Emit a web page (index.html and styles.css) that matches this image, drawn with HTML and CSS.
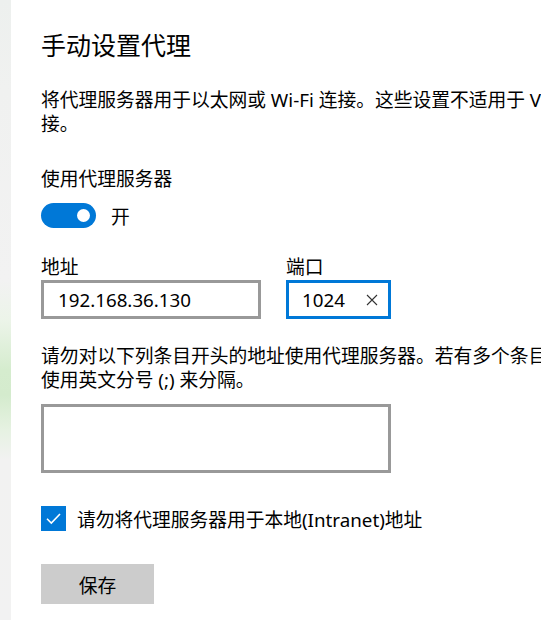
FILE: index.html
```html
<!DOCTYPE html>
<html lang="zh-CN">
<head>
<meta charset="utf-8">
<title>手动设置代理</title>
<link rel="stylesheet" href="styles.css">
</head>
<body>
<div class="side"></div>
<main class="main">
  <h1 class="title">手动设置代理</h1>
  <p class="desc">将代理服务器用于以太网或 Wi-Fi 连接。这些设置不适用于 VPN 连接。</p>
  <div class="label label-use">使用代理服务器</div>
  <div class="toggle-row">
    <span class="toggle"><span class="knob"></span></span>
    <span class="toggle-text">开</span>
  </div>
  <div class="fields">
    <div class="field field-addr">
      <div class="label">地址</div>
      <div class="input input-addr">192.168.36.130</div>
    </div>
    <div class="field field-port">
      <div class="label">端口</div>
      <div class="input input-port focused">
        <span>1024</span>
        <svg class="clear" width="12" height="12" viewBox="0 0 12 12"><path d="M1 1L11 11M11 1L1 11" stroke="#333" stroke-width="1.1" fill="none"/></svg>
      </div>
    </div>
  </div>
  <p class="desc desc-exc">请勿对以下列条目开头的地址使用代理服务器。若有多个条目，请使用英文分号 (;) 来分隔。</p>
  <div class="textarea"></div>
  <div class="check-row">
    <span class="checkbox"><svg width="25" height="25" viewBox="0 0 25 25"><path d="M6 12.8L10.3 17L19 8" stroke="#fff" stroke-width="1.6" fill="none"/></svg></span>
    <span class="check-text">请勿将代理服务器用于本地(Intranet)地址</span>
  </div>
  <div class="btn">保存</div>
</main>
</body>
</html>
```

FILE: styles.css
```css
html, body {
  margin: 0;
  padding: 0;
  overflow: hidden;
  background: #fff;
}
body {
  display: flex;
  width: 541px;
  height: 620px;
  font-family: "Noto Sans", "Noto Sans CJK SC", sans-serif;
  font-size: 18.75px;
  color: #000;
}
.side {
  flex: 0 0 11px;
  height: 620px;
  background: linear-gradient(to bottom, #edf0ee 0, #f0f1f0 90px, #f2f2f2 280px, #ecf4e9 320px, #d5ecce 370px, #d4ebcd 395px, #e6f2e2 430px, #f2f2f1 460px, #f2f2f2 100%);
}
.main {
  flex: 0 0 556px;
  padding-left: 30px;
}
.title {
  margin: 28px 0 0;
  font-size: 25px;
  font-weight: normal;
  line-height: 34px;
}
.desc {
  margin: 26px 0 0;
  line-height: 24px;
}
.label {
  line-height: 24px;
}
.label-use {
  margin-top: 31px;
}
.toggle-row {
  margin-top: 12px;
  display: flex;
  align-items: center;
  height: 25px;
}
.toggle {
  width: 55px;
  height: 25px;
  border-radius: 13px;
  background: #0078d7;
  display: flex;
  align-items: center;
  justify-content: flex-end;
  padding-right: 6px;
  box-sizing: border-box;
}
.knob {
  width: 13px;
  height: 13px;
  border-radius: 50%;
  background: #fff;
}
.toggle-text {
  margin-left: 15px;
}
.fields {
  margin-top: 27px;
  display: flex;
  gap: 25px;
}
.field .label {
  margin-bottom: 1px;
}
.input {
  box-sizing: border-box;
  height: 39px;
  border: 3px solid #999;
  display: flex;
  align-items: center;
  padding-left: 14px;
  line-height: 24px;
}
.input-addr {
  width: 220px;
}
.input-port {
  width: 105px;
  padding-left: 13px;
  justify-content: space-between;
  padding-right: 10px;
}
.focused {
  border-color: #0078d7;
}
.clear {
  display: block;
}
.desc-exc {
  margin-top: 25px;
}
.textarea {
  margin-top: 12px;
  box-sizing: border-box;
  width: 350px;
  height: 69px;
  border: 3px solid #999;
}
.check-row {
  margin-top: 33px;
  display: flex;
  align-items: center;
  height: 25px;
}
.checkbox {
  width: 25px;
  height: 25px;
  background: #0078d7;
  display: block;
}
.checkbox svg {
  display: block;
}
.check-text {
  margin-left: 11px;
}
.btn {
  margin-top: 33px;
  width: 113px;
  height: 40px;
  background: #ccc;
  display: flex;
  align-items: center;
  justify-content: center;
}
```
